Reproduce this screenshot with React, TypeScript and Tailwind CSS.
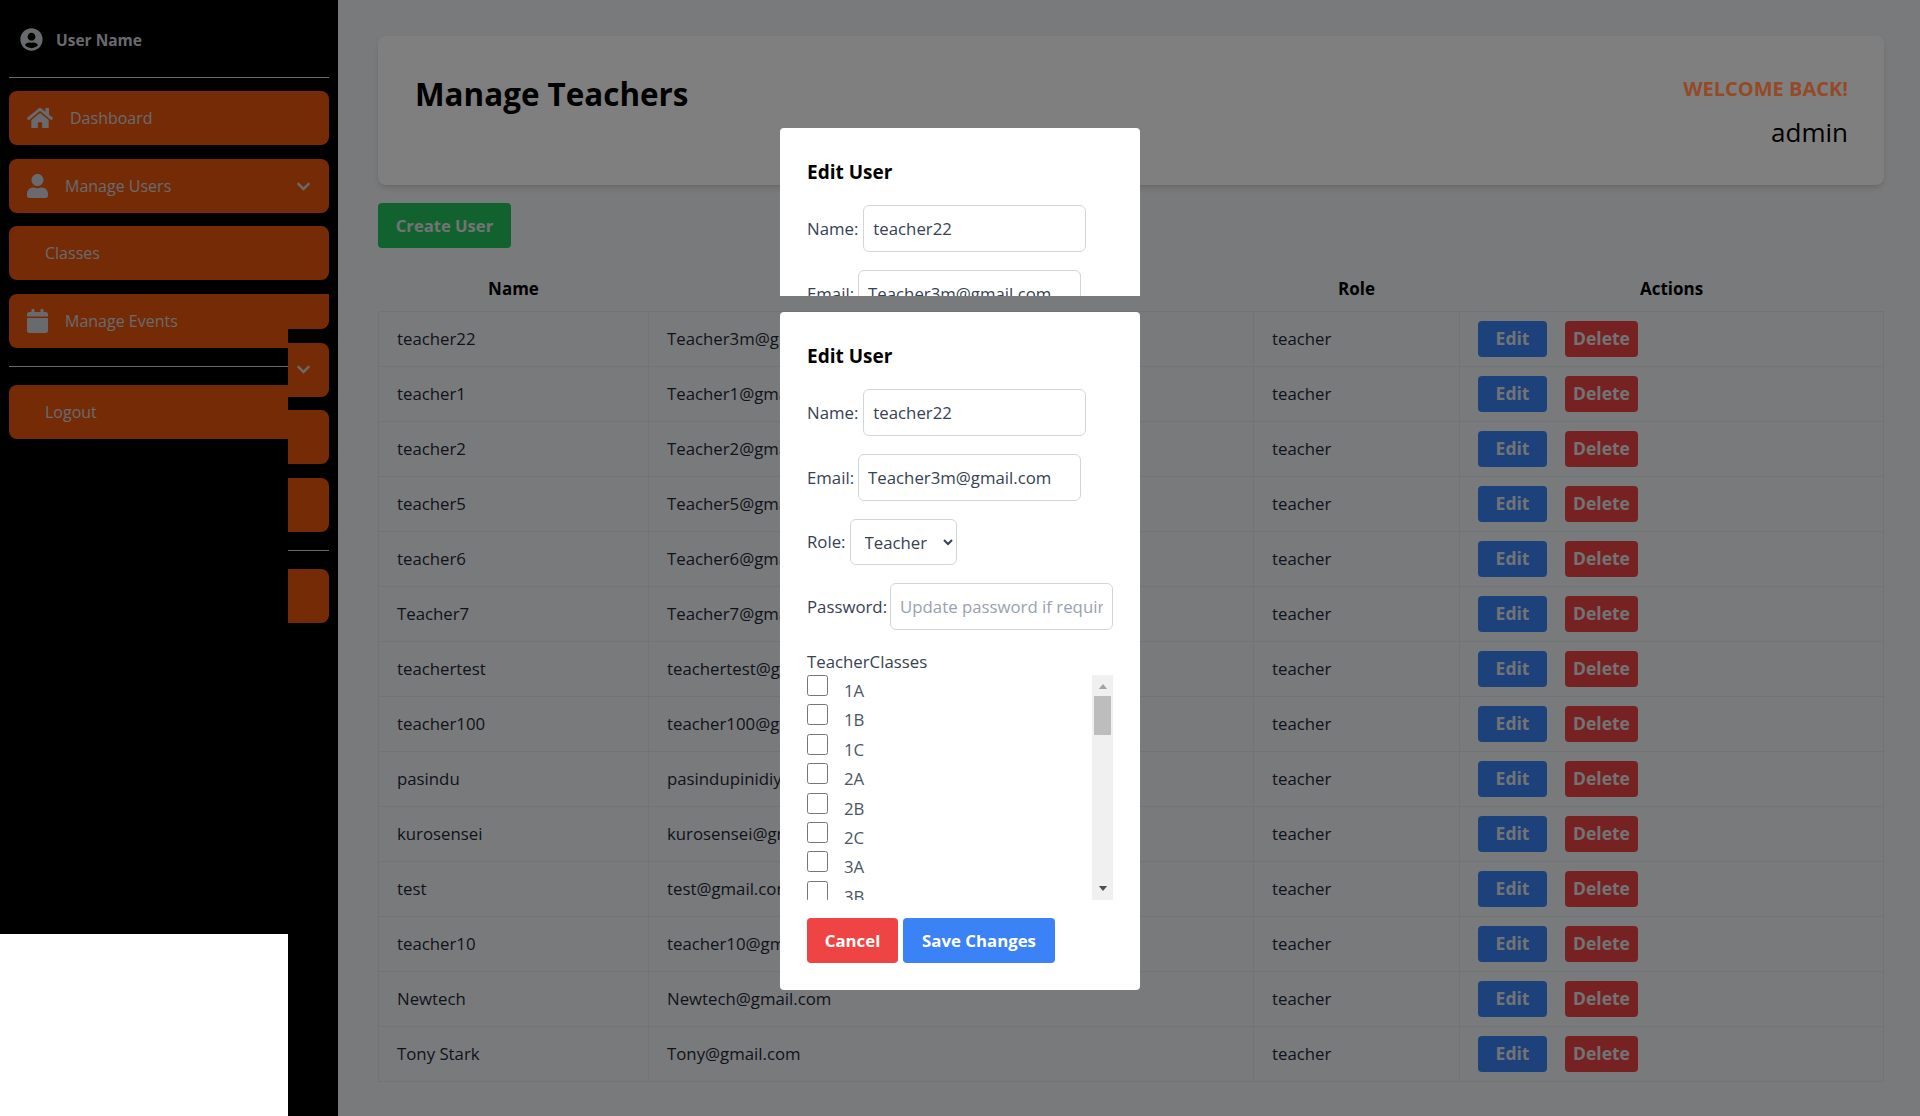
import React from 'react';
import { FaCalendar, FaChevronDown, FaHome, FaUser, FaUserCircle } from 'react-icons/fa';

const teachers = [
  ['teacher22', 'Teacher3m@gmail.com'],
  ['teacher1', 'Teacher1@gmail.com'],
  ['teacher2', 'Teacher2@gmail.com'],
  ['teacher5', 'Teacher5@gmail.com'],
  ['teacher6', 'Teacher6@gmail.com'],
  ['Teacher7', 'Teacher7@gmail.com'],
  ['teachertest', 'teachertest@gmail.com'],
  ['teacher100', 'teacher100@gmail.com'],
  ['pasindu', 'pasindupinidiya@gmail.com'],
  ['kurosensei', 'kurosensei@gmail.com'],
  ['test', 'test@gmail.com'],
  ['teacher10', 'teacher10@gmail.com'],
  ['Newtech', 'Newtech@gmail.com'],
  ['Tony Stark', 'Tony@gmail.com'],
];

const classes = ['1A', '1B', '1C', '2A', '2B', '2C', '3A', '3B', '3C'];

const navRow = 'flex h-[54px] shrink-0 items-center rounded-lg bg-[#ea580c] text-gray-300';

const SidebarTop = () => (
  <>
    <div className="flex h-[77px] shrink-0 items-center gap-[13px] pl-[11px] pt-[4px] font-bold text-gray-300">
      <FaUserCircle className="mb-[3px] h-[23px] w-[23px]" />
      <span className="text-[15.5px]">User Name</span>
    </div>
    <hr className="border-gray-300" />
    <div className={`${navRow} mt-[13px] pl-[18px]`}>
      <FaHome className="h-[26px] w-[26px]" />
      <span className="ml-[17px]">Dashboard</span>
    </div>
    <div className={`${navRow} mt-[14px] pl-[18px]`}>
      <FaUser className="h-[24px] w-[21px]" />
      <span className="ml-[17px]">Manage Users</span>
      <FaChevronDown className="ml-auto mr-[18px] h-[15px] w-[15px]" />
    </div>
    <div className={`${navRow} mt-[13px] pl-[36px]`}>Classes</div>
  </>
);

// Stale lower half of the sidebar, left over behind the repainted part
const StaleSidebarRows = () => (
  <>
    <div className="mt-[14px] h-[35px] shrink-0 rounded-b-lg bg-[#ea580c]" />
    <div className={`${navRow} mt-[14px] justify-end`}>
      <FaChevronDown className="mb-[2px] mr-[18px] h-[15px] w-[15px]" />
    </div>
    <div className={`${navRow} mt-[13px]`} />
    <div className={`${navRow} mt-[14px]`} />
    <hr className="mt-[18px] border-gray-300" />
    <div className={`${navRow} mt-[18px]`} />
  </>
);

const RepaintedPatch = () => (
  <div className="absolute left-0 top-[294px] h-[640px] w-[288px] overflow-hidden bg-black pl-[9px]">
    <div className="flex w-[320px] flex-col">
      <div className={`${navRow} pl-[18px]`}>
        <FaCalendar className="h-[24px] w-[21px]" />
        <span className="ml-[17px]">Manage Events</span>
      </div>
      <hr className="mt-[18px] border-gray-300" />
      <div className={`${navRow} mt-[18px] pl-[36px]`}>Logout</div>
    </div>
  </div>
);

const Field = ({ label, value, placeholder, className }: { label: string; value?: string; placeholder?: string; className: string }) => (
  <div className={`flex items-center ${className}`}>
    <label className="text-gray-700">{label}:</label>
    <input
      readOnly
      value={value ?? ''}
      placeholder={placeholder}
      className="h-[47px] w-[223px] rounded-md border border-gray-300 bg-white px-[9px] text-gray-700 placeholder:text-gray-400"
    />
  </div>
);

const ModalTop = () => (
  <>
    <h2 className="text-[19px] font-bold leading-[28px] text-black">Edit User</h2>
    <Field label="Name" value="teacher22" className="mt-[19px] gap-[5px]" />
    <Field label="Email" value="Teacher3m@gmail.com" className="mt-[18px] gap-[4px]" />
  </>
);

const EditUserModal = () => (
  <div className="h-[678px] w-[360px] shrink-0 overflow-hidden rounded bg-white px-[27px] pt-[30px] text-[16.8px]">
    <ModalTop />
    <div className="mt-[18px] flex items-center">
      <label className="mr-[4px] text-gray-700">Role:</label>
      <select defaultValue="Teacher" className="h-[46px] w-[107px] rounded-md border border-gray-300 bg-white pl-[10px] text-gray-700">
        <option>Teacher</option>
        <option>Admin</option>
      </select>
    </div>
    <Field label="Password" placeholder="Update password if required" className="mt-[18px] gap-[3px]" />
    <p className="mt-[20px] leading-[24px] text-gray-700">TeacherClasses</p>
    <div className="mt-[1px] flex h-[225px] w-[306px] overflow-hidden">
      <ul className="flex-1">
        {classes.map(c => (
          <li key={c} className="flex h-[29.4px] items-start">
            <input type="checkbox" readOnly className="h-[21px] w-[21px]" />
            <span className="ml-[16px] mt-[3px] text-gray-600">{c}</span>
          </li>
        ))}
      </ul>
      <div className="flex w-[21px] flex-col items-center bg-[#f0f0f0]">
        <svg viewBox="0 0 10 6" className="mt-[9px] h-[5px] w-[10px] fill-[#a3a3a3]">
          <path d="M5 0 10 6H0Z" />
        </svg>
        <div className="mt-[7px] h-[39px] w-[17px] bg-[#bdbdbd]" />
        <svg viewBox="0 0 10 6" className="mb-[9px] mt-auto h-[5px] w-[10px] fill-[#505050]">
          <path d="M0 0H10L5 6Z" />
        </svg>
      </div>
    </div>
    <div className="mt-[18px] flex gap-[5px]">
      <button className="h-[45px] w-[91px] rounded bg-[#ef4444] font-bold text-white">Cancel</button>
      <button className="h-[45px] w-[152px] rounded bg-[#3b82f6] font-bold text-white">Save Changes</button>
    </div>
  </div>
);

const App: React.FC = () => {
  return (
    <div className="relative flex h-[1116px] overflow-hidden bg-[#f3f4f6] font-['Open_Sans',sans-serif] text-[16px]">
      <aside className="flex w-[338px] shrink-0 flex-col bg-black px-[9px]">
        <SidebarTop />
        <StaleSidebarRows />
      </aside>
      <RepaintedPatch />

      <main className="flex-1 pl-[40px] pr-[36px] pt-[36px]">
        <div className="flex h-[149px] justify-between rounded-lg bg-white pl-[37px] pr-[36px] pt-[35px] shadow-md">
          <h1 className="text-[31.4px] font-bold leading-[46px] text-black">Manage Teachers</h1>
          <div className="text-right">
            <p className="relative z-20 text-[20px] font-bold leading-[36px] text-[#944a26]">WELCOME BACK!</p>
            <p className="mt-[8px] text-[26px] leading-[34px] text-black">admin</p>
          </div>
        </div>

        <button className="mt-[18px] h-[45px] w-[133px] rounded bg-[#22c55e] pt-[1px] text-[16.6px] font-bold text-gray-200">Create User</button>

        <table className="mt-[19px] w-full table-fixed border-collapse text-[16.8px]">
          <colgroup>
            <col className="w-[270px]" />
            <col className="w-[605px]" />
            <col className="w-[206px]" />
            <col />
          </colgroup>
          <thead>
            <tr className="h-[44px] text-[17px] text-black">
              <th className="font-bold">Name</th>
              <th className="font-bold">Email</th>
              <th className="font-bold">Role</th>
              <th className="font-bold">Actions</th>
            </tr>
          </thead>
          <tbody>
            {teachers.map(([name, email]) => (
              <tr key={name} className="h-[55px] text-gray-800">
                <td className="border border-[#e5e7eb] pl-[18px]">{name}</td>
                <td className="border border-[#e5e7eb] pl-[18px]">{email}</td>
                <td className="border border-[#e5e7eb] pl-[18px]">teacher</td>
                <td className="border border-[#e5e7eb] pl-[18px]">
                  <div className="flex gap-[18px]">
                    <button className="h-[36px] w-[69px] rounded bg-[#3b82f6] text-[17.5px] font-bold text-gray-200">Edit</button>
                    <button className="h-[36px] w-[73px] rounded bg-[#ef4444] text-[17.5px] font-bold text-gray-200">Delete</button>
                  </div>
                </td>
              </tr>
            ))}
          </tbody>
        </table>
      </main>

      <div className="absolute inset-0 z-10 bg-black/50" />
      <div className="absolute bottom-0 left-0 top-[934px] z-20 w-[288px] bg-white" />

      <div className="absolute inset-x-0 top-[128px] z-20 flex flex-col items-center gap-[16px]">
        <div className="h-[168px] w-[360px] overflow-hidden rounded-t bg-white px-[27px] pt-[30px] text-[16.8px]">
          <ModalTop />
        </div>
        <EditUserModal />
      </div>
    </div>
  );
};

export default App;
